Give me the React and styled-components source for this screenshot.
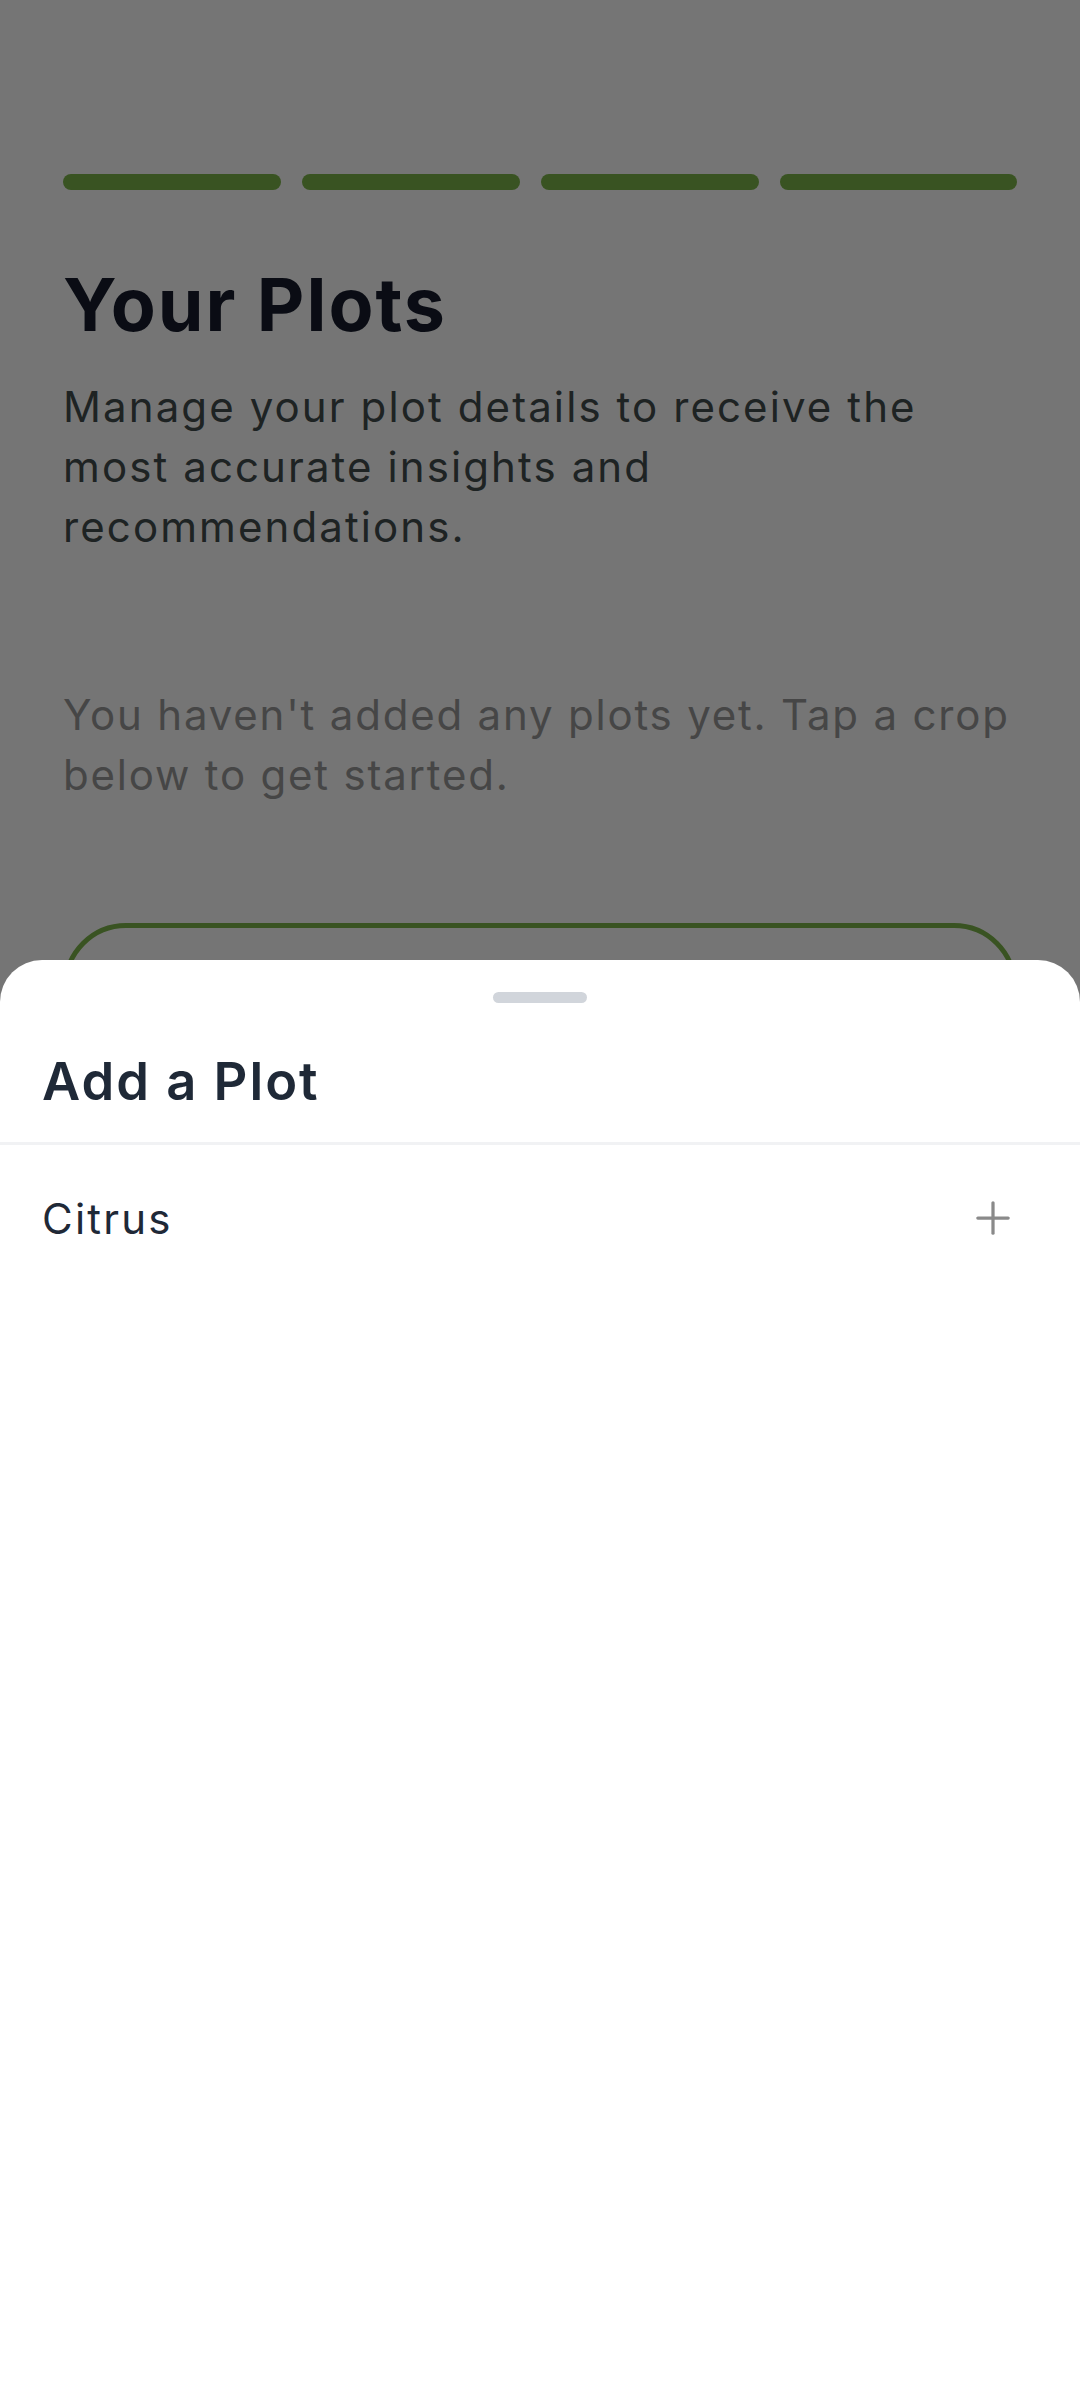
import React from "react";
import styled, { createGlobalStyle } from "styled-components";
import { Plus } from "lucide-react";

const GlobalStyle = createGlobalStyle`
  html, body {
    margin: 0;
    padding: 0;
    background: #ffffff;
    font-family: Inter, "Open Sans", sans-serif;
  }
`;

const green = "#7db54a";

const Page = styled.div`
  position: relative;
  height: 2400px;
  padding: 174px 63px 0;
  box-sizing: border-box;
  background: #ffffff;
`;

const Steps = styled.div`
  display: grid;
  grid-template-columns: 1fr 1fr 1fr 1.09fr;
  gap: 21px;
`;

const Step = styled.div`
  height: 16px;
  border-radius: 8px;
  background: ${({ $done }) => ($done ? green : "#e5e7eb")};
`;

const Title = styled.h1`
  margin: 71px 0 0;
  font-size: 73.5px;
  line-height: 88px;
  font-weight: 700;
  letter-spacing: 2px;
  color: #161c2c;
`;

const Lead = styled.p`
  max-width: 900px;
  margin: 28px 0 0;
  font-size: 42px;
  line-height: 60px;
  letter-spacing: 2.1px;
  color: #434c4e;
`;

const Empty = styled.p`
  margin: 128px 0 0;
  font-size: 42px;
  line-height: 60px;
  letter-spacing: 1.8px;
  color: #999999;
`;

const OutlineButton = styled.button`
  display: block;
  width: 100%;
  height: 126px;
  margin-top: 118px;
  border: 5px solid ${green};
  border-radius: 63px;
  background: transparent;
`;

const Scrim = styled.div`
  position: fixed;
  inset: 0;
  background: rgba(0, 0, 0, 0.54);
`;

const Sheet = styled.div`
  position: fixed;
  top: 960px;
  left: 0;
  right: 0;
  bottom: 0;
  display: flex;
  flex-direction: column;
  background: #ffffff;
  border-radius: 42px 42px 0 0;
`;

const Handle = styled.div`
  align-self: center;
  width: 94px;
  height: 10.5px;
  margin-top: 32px;
  border-radius: 6px;
  background: #d1d5db;
`;

const SheetHeader = styled.div`
  padding: 44px 42px 27px;
  border-bottom: 3px solid #f1f2f4;
`;

const SheetTitle = styled.h2`
  margin: 0;
  font-size: 52.5px;
  line-height: 68px;
  font-weight: 600;
  letter-spacing: 2px;
  color: #1f2937;
`;

const CropRow = styled.div`
  display: flex;
  align-items: center;
  justify-content: space-between;
  height: 147px;
  padding: 0 61px 0 42px;
  font-size: 42px;
  letter-spacing: 2.2px;
  color: #1f2937;
`;

const AddIcon = styled(Plus)`
  width: 52px;
  height: 52px;
  color: #8a8a8a;
`;

const crops = ["Citrus"];

export default function App() {
  return (
    <>
      <GlobalStyle />
      <Page>
        <Steps>
          {[0, 1, 2, 3].map((i) => (
            <Step key={i} $done />
          ))}
        </Steps>
        <Title>Your Plots</Title>
        <Lead>
          Manage your plot details to receive the most accurate insights and
          recommendations.
        </Lead>
        <Empty>
          You haven't added any plots yet. Tap a crop below to get started.
        </Empty>
        <OutlineButton aria-label="Add plot" />
        <Scrim />
        <Sheet>
          <Handle />
          <SheetHeader>
            <SheetTitle>Add a Plot</SheetTitle>
          </SheetHeader>
          {crops.map((crop) => (
            <CropRow key={crop}>
              {crop}
              <AddIcon strokeWidth={1.5} />
            </CropRow>
          ))}
        </Sheet>
      </Page>
    </>
  );
}
